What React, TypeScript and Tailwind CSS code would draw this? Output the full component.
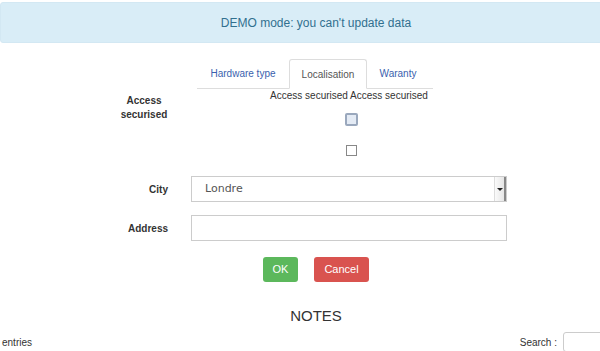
import React from 'react';

const tabs = [
  { label: 'Hardware type', active: false, w: 'w-[92px]' },
  { label: 'Localisation', active: true, w: 'w-[78px]' },
  { label: 'Waranty', active: false, w: 'w-[62px]' },
];

export default function App() {
  return (
    <div className="w-[600px] h-[351px] overflow-hidden bg-white font-['Liberation_Sans',Arial,sans-serif] text-[#333]">
      <div className="mt-[2px] w-[632px] h-[41px] bg-[#d9edf7] border border-[#d3e8f3] rounded-[3px] flex items-center justify-center text-[12px] text-[#31708f]">
        DEMO mode: you can't update data
      </div>

      {/* tabs */}
      <div className="mt-[16px] ml-[197px] w-[236px] h-[30px] flex items-end border-b border-[#ddd]">
        {tabs.map((t) => (
          <div
            key={t.label}
            className={`${t.w} h-[30px] flex items-center justify-center text-[10px] ${
              t.active
                ? 'bg-white border border-[#ddd] border-b-white -mb-px rounded-t-[3px] text-[#555]'
                : 'text-[#3a5fae]'
            }`}
          >
            {t.label}
          </div>
        ))}
      </div>

      {/* access securised */}
      <div className="flex">
        <div className="w-[170px] pt-[5px] text-[10px] font-bold leading-[14px] text-[#333]">
          <div className="w-[52px] ml-auto text-center">Access securised</div>
        </div>
        <div className="ml-[21px] w-[316px] flex flex-col items-center">
          <div className="text-[10px] leading-[14px] text-[#333]">Access securised Access securised</div>
          <div className="mt-[10px] w-[13px] h-[13px] rounded-[2px] border-2 border-[#9aa8bd] bg-[#e4ebf5] ml-[5px]" />
          <div className="mt-[19px] w-[11px] h-[11px] border border-[#888] bg-white ml-[5px]" />
        </div>
      </div>

      {/* city */}
      <div className="flex items-center mt-[20px]">
        <div className="w-[168px] text-right text-[10px] font-bold text-[#333]">City</div>
        <div className="ml-[23px] w-[316px] h-[26px] border border-[#ccc] flex items-center justify-between">
          <span className="pl-[13px] text-[11px] text-[#555] font-['DejaVu_Sans',sans-serif]">Londre</span>
          <div className="w-[12px] h-[24px] bg-gradient-to-r from-[#fafafa] to-[#e6e6e6] border-l border-[#ddd] border-r-2 border-r-[#888] flex items-center justify-center">
            <div className="w-0 h-0 border-l-[3px] border-r-[3px] border-t-[3px] border-l-transparent border-r-transparent border-t-[#222]" />
          </div>
        </div>
      </div>

      {/* address */}
      <div className="flex items-center mt-[13px]">
        <div className="w-[168px] text-right text-[10px] font-bold text-[#333]">Address</div>
        <div className="ml-[23px] w-[316px] h-[26px] border border-[#ccc] bg-white" />
      </div>

      {/* buttons */}
      <div className="flex mt-[16px] ml-[263px] gap-[16px]">
        <div className="w-[35px] h-[25px] rounded-[3px] bg-[#5cb85c] text-white text-[11px] flex items-center justify-center">OK</div>
        <div className="w-[55px] h-[25px] rounded-[3px] bg-[#d9534f] text-white text-[11px] flex items-center justify-center">Cancel</div>
      </div>

      <div className="mt-[25px] text-center pl-[32px] text-[15px] text-[#333] leading-[18px]">NOTES</div>

      <div className="w-[620px] flex items-end justify-between mt-[7px]">
        <span className="ml-[2px] mb-[2px] text-[10px] text-[#333]">entries</span>
        <div className="flex items-end">
          <span className="mb-[2px] text-[10px] text-[#333]">Search :</span>
          <div className="ml-[6px] w-[57px] h-[20px] border border-[#ccc] rounded-[3px] bg-white" />
        </div>
      </div>
    </div>
  );
}
